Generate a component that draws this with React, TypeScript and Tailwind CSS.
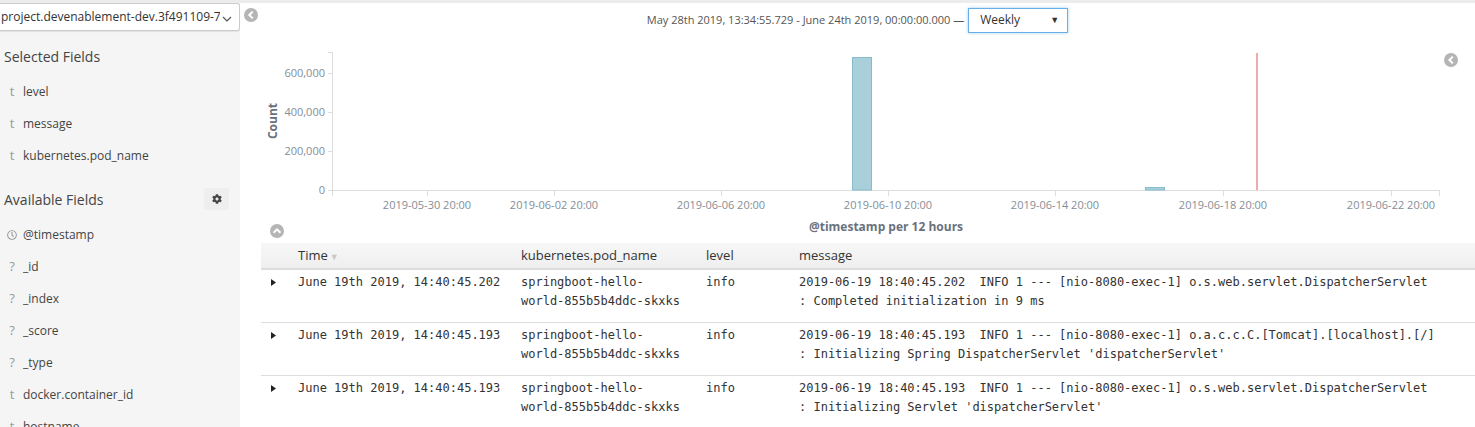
import React from 'react';
import { FaCog, FaRegClock } from 'react-icons/fa';

type Field = { type: 't' | '?' | 'clock'; name: string };

const selected: Field[] = [
  { type: 't', name: 'level' },
  { type: 't', name: 'message' },
  { type: 't', name: 'kubernetes.pod_name' },
];

const available: Field[] = [
  { type: 'clock', name: '@timestamp' },
  { type: '?', name: '_id' },
  { type: '?', name: '_index' },
  { type: '?', name: '_score' },
  { type: '?', name: '_type' },
  { type: 't', name: 'docker.container_id' },
  { type: 't', name: 'hostname' },
];

const rows = [
  {
    time: 'June 19th 2019, 14:40:45.202',
    pod: ['springboot-hello-', 'world-855b5b4ddc-skxks'],
    level: 'info',
    msg: ['2019-06-19 18:40:45.202  INFO 1 --- [nio-8080-exec-1] o.s.web.servlet.DispatcherServlet', ': Completed initialization in 9 ms'],
  },
  {
    time: 'June 19th 2019, 14:40:45.193',
    pod: ['springboot-hello-', 'world-855b5b4ddc-skxks'],
    level: 'info',
    msg: ['2019-06-19 18:40:45.193  INFO 1 --- [nio-8080-exec-1] o.a.c.c.C.[Tomcat].[localhost].[/]', ": Initializing Spring DispatcherServlet 'dispatcherServlet'"],
  },
  {
    time: 'June 19th 2019, 14:40:45.193',
    pod: ['springboot-hello-', 'world-855b5b4ddc-skxks'],
    level: 'info',
    msg: ['2019-06-19 18:40:45.193  INFO 1 --- [nio-8080-exec-1] o.s.web.servlet.DispatcherServlet', ": Initializing Servlet 'dispatcherServlet'"],
  },
];

const xTicks = [
  { x: 427, label: '2019-05-30 20:00' },
  { x: 554, label: '2019-06-02 20:00' },
  { x: 721, label: '2019-06-06 20:00' },
  { x: 888, label: '2019-06-10 20:00' },
  { x: 1055, label: '2019-06-14 20:00' },
  { x: 1223, label: '2019-06-18 20:00' },
  { x: 1391, label: '2019-06-22 20:00' },
];

const yTicks = [
  { y: 73, label: '600,000' },
  { y: 112, label: '400,000' },
  { y: 151, label: '200,000' },
  { y: 190, label: '0' },
];

const FieldRow = ({ f }: { f: Field }) => (
  <div className="h-[32px] flex items-center text-[12px] text-[#444]">
    <span className="w-[23px] flex justify-center text-[13px] text-[#999] pl-[1px]">
      {f.type === 'clock' ? <FaRegClock size={10} className="text-[#999]" /> : f.type}
    </span>
    <span>{f.name}</span>
  </div>
);

const Chart = () => (
  <svg width={1235} height={203} viewBox="240 37 1235 203" className="block" style={{ fontFamily: '"Open Sans", sans-serif' }}>
    {/* axes */}
    <line x1={332.5} y1={52} x2={332.5} y2={196} stroke="#ddd" />
    <line x1={328} y1={52.5} x2={332} y2={52.5} stroke="#ddd" />
    <line x1={332} y1={190.5} x2={1440} y2={190.5} stroke="#ddd" />
    <line x1={1439.5} y1={190} x2={1439.5} y2={196} stroke="#ddd" />
    {yTicks.map((t) => (
      <g key={t.label}>
        <line x1={328} y1={t.y + 0.5} x2={332} y2={t.y + 0.5} stroke="#ddd" />
        <text x={325} y={t.y + 4} textAnchor="end" fontSize={11} fill="#848e96">
          {t.label}
        </text>
      </g>
    ))}
    <text x={0} y={0} transform="translate(277 121) rotate(-90)" textAnchor="middle" fontSize={12} fontWeight={700} fill="#6a717d">
      Count
    </text>
    {xTicks.map((t) => (
      <g key={t.label}>
        <line x1={t.x + 0.5} y1={190} x2={t.x + 0.5} y2={196} stroke="#ddd" />
        <text x={t.x} y={209} textAnchor="middle" fontSize={11} fill="#848e96">
          {t.label}
        </text>
      </g>
    ))}
    {/* bars */}
    <rect x={852.5} y={57.5} width={19} height={132.5} fill="#a8cfda" stroke="#86bccb" />
    <rect x={1145.5} y={187.5} width={19} height={2.5} fill="#a8cfda" stroke="#86bccb" />
    {/* current time marker */}
    <line x1={1257} y1={53} x2={1257} y2={190} stroke="#f2a9a9" strokeWidth={2} />
    <text x={886} y={231} textAnchor="middle" fontSize={12} fontWeight={700} fill="#6a717d">
      @timestamp per 12 hours
    </text>
    {/* right legend toggle */}
    <circle cx={1451} cy={60} r={7} fill="#b5b5b5" />
    <path d="M1452.8 56.6 L1449.4 60 L1452.8 63.4" fill="none" stroke="#fff" strokeWidth={2} />
    {/* collapse chart */}
    <circle cx={277} cy={231} r={7} fill="#b5b5b5" />
    <path d="M273.6 232.8 L277 229.4 L280.4 232.8" fill="none" stroke="#fff" strokeWidth={2} />
  </svg>
);

export default function App() {
  return (
    <div className="w-[1475px] h-[427px] overflow-hidden bg-white" style={{ fontFamily: '"Open Sans", sans-serif' }}>
      <div className="h-[3px] bg-[#ececec]" />
      <div className="flex">
        {/* sidebar */}
        <div className="w-[240px] shrink-0 bg-[#f5f5f5] h-[424px]">
          <div className="h-[28px] bg-white border border-l-0 border-[#ccc] rounded-r-[3px] shadow-[0_1px_1px_rgba(0,0,0,0.08)] flex items-center relative overflow-hidden">
            <span className="pl-[1px] text-[12px] text-[#333] whitespace-nowrap overflow-hidden w-[220px]">
              project.devenablement-dev.3f491109-7e2a
            </span>
            <svg width="10" height="8" viewBox="0 0 10 8" className="ml-[2px] mt-[4px]">
              <path d="M1 2 L5 6 L9 2" fill="none" stroke="#555" strokeWidth={1.2} />
            </svg>
          </div>
          <div className="mt-[14px] h-[22px] flex items-center pl-[4px] text-[14px] text-[#444]">Selected Fields</div>
          <div className="mt-[9px]">
            {selected.map((f) => (
              <FieldRow key={f.name} f={f} />
            ))}
          </div>
          <div className="mt-[12px] h-[30px] flex items-center justify-between pl-[4px] pr-[11px] text-[14px] text-[#444]">
            <span>Available Fields</span>
            <span className="w-[25px] h-[22px] rounded-[3px] bg-[#eeeeee] flex items-center justify-center">
              <FaCog size={10} className="text-[#444]" />
            </span>
          </div>
          <div className="mt-[5px]">
            {available.map((f) => (
              <FieldRow key={f.name} f={f} />
            ))}
          </div>
        </div>

        {/* main */}
        <div className="flex-1 relative">
          <svg width="14" height="14" viewBox="0 0 14 14" className="absolute left-[4px] top-[5px]">
            <circle cx="7" cy="7" r="7" fill="#b5b5b5" />
            <path d="M8.7 3.6 L5.3 7 L8.7 10.4" fill="none" stroke="#fff" strokeWidth={2} />
          </svg>
          <div className="h-[34px] flex items-center justify-center gap-[4px]">
            <span className="text-[11px] text-[#555]">
              May 28th 2019, 13:34:55.729 - June 24th 2019, 00:00:00.000 —
            </span>
            <div className="w-[100px] h-[25px] border border-[#66afe9] shadow-[0_0_3px_rgba(102,175,233,0.6)] flex items-center justify-between pl-[11px] pr-[8px] text-[12px] text-[#333]">
              <span>Weekly</span>
              <span className="text-[9px] text-[#333]">▼</span>
            </div>
          </div>
          <Chart />
          <div className="ml-[21px] mt-[3px]">
            <div className="grid grid-cols-[37px_223px_185px_93px_1fr] h-[27px] items-center bg-gradient-to-b from-[#f7f7f7] to-[#efefef] border-b-2 border-[#dcdcdc] text-[13px] text-[#333]">
              <span />
              <span className="flex items-center">
                Time<span className="text-[#c8c8c8] text-[9px] ml-[2px] mt-[3px]">▼</span>
              </span>
              <span>kubernetes.pod_name</span>
              <span>level</span>
              <span>message</span>
            </div>
            {rows.map((r, i) => (
              <div
                key={i}
                className="grid grid-cols-[37px_223px_185px_93px_1fr] pt-[3px] pb-[11px] border-b border-[#ddd] text-[12px] leading-[19px] text-[#333]"
                style={{ fontFamily: '"DejaVu Sans Mono", monospace' }}
              >
                <span className="flex justify-start pl-[10px] pt-[6px]">
                  <svg width="5" height="7" viewBox="0 0 5 7">
                    <path d="M0 0 L5 3.5 L0 7 Z" fill="#222" />
                  </svg>
                </span>
                <span className="whitespace-nowrap">{r.time}</span>
                <span className="whitespace-nowrap">
                  {r.pod[0]}
                  <br />
                  {r.pod[1]}
                </span>
                <span>{r.level}</span>
                <span className="whitespace-pre">
                  {r.msg[0]}
                  <br />
                  {r.msg[1]}
                </span>
              </div>
            ))}
          </div>
        </div>
      </div>
    </div>
  );
}
